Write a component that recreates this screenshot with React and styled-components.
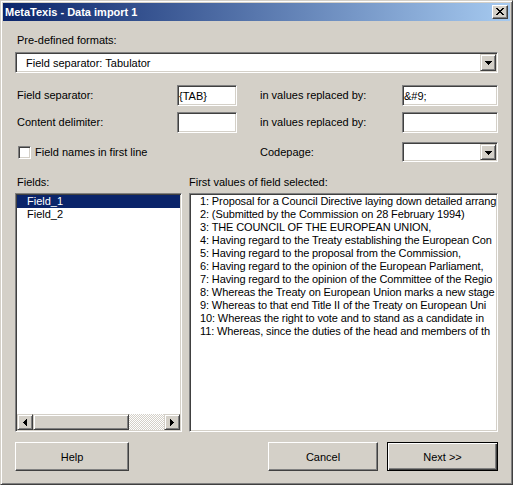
import React from "react";
import styled, { createGlobalStyle, css } from "styled-components";

const FACE = "#D4D0C8";

const Global = createGlobalStyle`
  html, body { margin: 0; padding: 0; background: ${FACE}; }
  body { font-family: "Liberation Sans", Arial, sans-serif; font-size: 11px; }
  * { box-sizing: border-box; }
`;

const sunken = css`
  border: 1px solid;
  border-color: #808080 #fff #fff #808080;
  box-shadow: inset 1px 1px #404040, inset -1px -1px ${FACE};
  background: #fff;
`;

const raisedSmall = css`
  border: 1px solid;
  border-color: ${FACE} #404040 #404040 ${FACE};
  box-shadow: inset 1px 1px #fff, inset -1px -1px #808080;
  background: ${FACE};
`;

const Window = styled.div`
  width: 513px;
  height: 485px;
  background: ${FACE};
  border: 1px solid;
  border-color: ${FACE} #404040 #404040 ${FACE};
  box-shadow: inset 1px 1px #fff, inset -1px -1px #808080;
  padding: 2px;
  display: flex;
  flex-direction: column;
  color: #000;
  font: 11px "Liberation Sans", Arial, sans-serif;
`;

const TitleBar = styled.div`
  flex: none;
  height: 18px;
  background: linear-gradient(to right, #0a246a, #a6caf0);
  display: flex;
  align-items: center;
  justify-content: space-between;
  padding: 0 2px 0 2px;
`;

const Title = styled.span`
  color: #fff;
  font-weight: bold;
  font-size: 11px;
  line-height: 13px;
  white-space: nowrap;
`;

const CloseButton = styled.div`
  width: 16px;
  height: 14px;
  border: 1px solid;
  border-color: #fff #404040 #404040 #fff;
  box-shadow: inset -1px -1px #808080;
  background: ${FACE};
  display: flex;
  align-items: center;
  justify-content: center;
  padding-bottom: 1px;
`;

const Body = styled.div`
  flex: 1;
  padding: 13px 12px 0 12px;
  display: flex;
  flex-direction: column;
`;

const Label = styled.div`
  height: 13px;
  line-height: 13px;
  padding-left: ${(p) => p.$indent ?? 2}px;
  white-space: nowrap;
`;

const Combo = styled.div`
  ${sunken};
  height: ${(p) => p.$h}px;
  margin-top: ${(p) => p.$mt || 0}px;
  padding: 1px;
  display: flex;
  align-items: stretch;
`;

const ComboText = styled.div`
  flex: 1;
  padding-left: ${(p) => p.$pad}px;
  display: flex;
  align-items: center;
  white-space: nowrap;
  overflow: hidden;
`;

const DropButton = styled.div`
  ${raisedSmall};
  width: 16px;
  display: flex;
  align-items: center;
  justify-content: center;
  padding: 1px 0 0 1px;
`;

const FormRow = styled.div`
  display: grid;
  grid-template-columns: 162px 60px 165px 96px;
  height: ${(p) => p.$h}px;
  margin-top: ${(p) => p.$mt}px;
  align-items: center;
`;

const Edit = styled.div`
  ${sunken};
  height: 100%;
  padding-left: 1px;
  display: flex;
  align-items: center;
  white-space: nowrap;
`;

const CheckLabel = styled.label`
  display: flex;
  align-items: center;
  gap: 4px;
  padding-left: 3px;
  white-space: nowrap;
`;

const CheckBox = styled.span`
  ${sunken};
  width: 13px;
  height: 13px;
  display: inline-block;
  margin-top: 1px;
`;

const HeaderRow = styled.div`
  display: flex;
  margin-top: 14px;
  gap: 7px;
`;

const HeaderCell = styled.div`
  width: ${(p) => p.$w}px;
  height: 13px;
  line-height: 13px;
  padding-left: ${(p) => p.$indent}px;
  white-space: nowrap;
`;

const Panels = styled.div`
  display: flex;
  gap: 7px;
  height: 239px;
  margin-top: 4px;
`;

const ListBox = styled.div`
  ${sunken};
  width: 167px;
  padding: 1px;
  display: flex;
  flex-direction: column;
`;

const ListItems = styled.div`
  flex: 1;
  overflow: hidden;
`;

const ListItem = styled.div`
  height: 13px;
  line-height: 13px;
  padding-left: 10px;
  white-space: nowrap;
  background: ${(p) => (p.$selected ? "#0a246a" : "transparent")};
  color: ${(p) => (p.$selected ? "#fff" : "#000")};
`;

const HScroll = styled.div`
  height: 16px;
  display: flex;
  flex: none;
`;

const ScrollArrow = styled.div`
  ${raisedSmall};
  width: 16px;
  height: 16px;
  display: flex;
  align-items: center;
  justify-content: center;
`;

const ScrollThumb = styled.div`
  ${raisedSmall};
  width: 96px;
  height: 16px;
`;

const ScrollTrack = styled.div`
  flex: 1;
  background: repeating-conic-gradient(#fff 0 25%, ${FACE} 0 50%) 0 0 / 2px 2px;
`;

const ValuesBox = styled.div`
  ${sunken};
  flex: 1;
  padding: 1px 1px 1px 10px;
  overflow: hidden;
`;

const ValueLine = styled.div`
  height: 13px;
  line-height: 13px;
  white-space: nowrap;
  letter-spacing: -0.12px;
`;

const Footer = styled.div`
  display: flex;
  justify-content: space-between;
  margin-top: 10px;
`;

const ButtonGroup = styled.div`
  display: flex;
  gap: 9px;
`;

const Button = styled.button`
  width: ${(p) => p.$w}px;
  height: 29px;
  margin: 0;
  padding: 0;
  font: 11px "Liberation Sans", Arial, sans-serif;
  color: #000;
  background: ${FACE};
  border: 1px solid;
  ${(p) =>
    p.$default
      ? css`
          border-color: #000;
          box-shadow: inset 1px 1px #fff, inset -1px -1px #404040,
            inset -2px -2px #808080;
        `
      : css`
          border-color: #fff #404040 #404040 #fff;
          box-shadow: inset -1px -1px #808080;
        `}
`;

const DownArrow = () => (
  <svg width="7" height="4" viewBox="0 0 7 4" shapeRendering="crispEdges">
    <path d="M0 0h7v1H0zM1 1h5v1H1zM2 2h3v1H2zM3 3h1v1H3z" fill="#000" />
  </svg>
);

const LeftArrow = () => (
  <svg width="4" height="7" viewBox="0 0 4 7" shapeRendering="crispEdges">
    <path d="M3 0h1v7H3zM2 1h1v5H2zM1 2h1v3H1zM0 3h1v1H0z" fill="#000" />
  </svg>
);

const RightArrow = () => (
  <svg width="4" height="7" viewBox="0 0 4 7" shapeRendering="crispEdges">
    <path d="M0 0h1v7H0zM1 1h1v5H1zM2 2h1v3H2zM3 3h1v1H3z" fill="#000" />
  </svg>
);

const CloseGlyph = () => (
  <svg width="8" height="7" viewBox="0 0 8 7" shapeRendering="crispEdges">
    <path
      d="M0 0h2v1H0zM6 0h2v1H6zM1 1h2v1H1zM5 1h2v1H5zM2 2h4v1H2zM3 3h2v1H3zM2 4h4v1H2zM1 5h2v1H1zM5 5h2v1H5zM0 6h2v1H0zM6 6h2v1H6z"
      fill="#000"
    />
  </svg>
);

const fields = ["Field_1", "Field_2"];

const values = [
  "1: Proposal for a Council Directive laying down detailed arrang",
  "2: (Submitted by the Commission on 28 February 1994)",
  "3: THE COUNCIL OF THE EUROPEAN UNION,",
  "4: Having regard to the Treaty establishing the European Con",
  "5: Having regard to the proposal from the Commission,",
  "6: Having regard to the opinion of the European Parliament,",
  "7: Having regard to the opinion of the Committee of the Regio",
  "8: Whereas the Treaty on European Union marks a new stage",
  "9: Whereas to that end Title II of the Treaty on European Uni",
  "10: Whereas the right to vote and to stand as a candidate in",
  "11: Whereas, since the duties of the head and members of th",
];

export default function App() {
  return (
    <>
      <Global />
      <Window>
        <TitleBar>
          <Title>MetaTexis - Data import 1</Title>
          <CloseButton>
            <CloseGlyph />
          </CloseButton>
        </TitleBar>
        <Body>
          <Label>Pre-defined formats:</Label>
          <Combo $h={21} $mt={5}>
            <ComboText $pad={9}>Field separator: Tabulator</ComboText>
            <DropButton>
              <DownArrow />
            </DropButton>
          </Combo>

          <FormRow $h={21} $mt={12}>
            <Label>Field separator:</Label>
            <Edit>{"{TAB}"}</Edit>
            <Label $indent={23}>in values replaced by:</Label>
            <Edit>&amp;#9;</Edit>
          </FormRow>

          <FormRow $h={21} $mt={6}>
            <Label>Content delimiter:</Label>
            <Edit />
            <Label $indent={23}>in values replaced by:</Label>
            <Edit />
          </FormRow>

          <FormRow $h={20} $mt={9}>
            <CheckLabel>
              <CheckBox />
              Field names in first line
            </CheckLabel>
            <span />
            <Label $indent={23}>Codepage:</Label>
            <Combo $h={20}>
              <ComboText $pad={2} />
              <DropButton>
                <DownArrow />
              </DropButton>
            </Combo>
          </FormRow>

          <HeaderRow>
            <HeaderCell $w={167} $indent={2}>
              Fields:
            </HeaderCell>
            <HeaderCell $w={309} $indent={0}>
              First values of field selected:
            </HeaderCell>
          </HeaderRow>

          <Panels>
            <ListBox>
              <ListItems>
                {fields.map((f, i) => (
                  <ListItem key={f} $selected={i === 0}>
                    {f}
                  </ListItem>
                ))}
              </ListItems>
              <HScroll>
                <ScrollArrow>
                  <LeftArrow />
                </ScrollArrow>
                <ScrollThumb />
                <ScrollTrack />
                <ScrollArrow>
                  <RightArrow />
                </ScrollArrow>
              </HScroll>
            </ListBox>
            <ValuesBox>
              {values.map((v) => (
                <ValueLine key={v}>{v}</ValueLine>
              ))}
            </ValuesBox>
          </Panels>

          <Footer>
            <Button $w={114}>Help</Button>
            <ButtonGroup>
              <Button $w={110}>Cancel</Button>
              <Button $w={111} $default>
                Next &gt;&gt;
              </Button>
            </ButtonGroup>
          </Footer>
        </Body>
      </Window>
    </>
  );
}
